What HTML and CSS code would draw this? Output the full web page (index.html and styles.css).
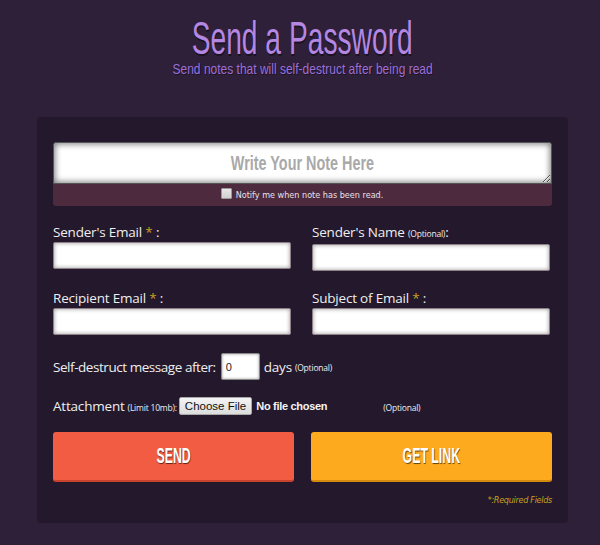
FILE: index.html
```html
<!DOCTYPE html>
<html>
<head>
<meta charset="utf-8">
<link rel="stylesheet" href="styles.css">
</head>
<body>
<div class="page">
  <header class="head">
    <h1 class="title"><span class="sq sq-title">Send a Password</span></h1>
    <p class="subtitle"><span class="sq sq-sub">Send notes that will self-destruct after being read</span></p>
  </header>
  <form class="card">
    <div class="note">
      <div class="note-box">
        <textarea class="note-text" aria-label="Write Your Note Here"></textarea>
        <div class="ph"><span class="sq sq-ph">Write Your Note Here</span></div>
      </div>
      <label class="notify"><span class="check"></span>Notify me when note has been read.</label>
    </div>
    <div class="grid">
      <div class="field">
        <label class="lbl">Sender's Email <span class="star">*</span> :</label>
        <input class="inp" type="text">
      </div>
      <div class="field">
        <label class="lbl">Sender's Name <small class="opt">(Optional)</small>:</label>
        <input class="inp" type="text">
      </div>
      <div class="field">
        <label class="lbl">Recipient Email <span class="star">*</span> :</label>
        <input class="inp" type="text">
      </div>
      <div class="field">
        <label class="lbl">Subject of Email <span class="star">*</span> :</label>
        <input class="inp" type="text">
      </div>
    </div>
    <div class="row destruct">
      <span class="lbl lbl-tight">Self-destruct message after:</span>
      <input class="days" type="text" value="0">
      <span class="lbl">days</span>
      <small class="opt">(Optional)</small>
    </div>
    <div class="row attach">
      <span class="lbl">Attachment</span>
      <small class="opt">(Limit 10mb):</small>
      <span class="file-btn">Choose File</span>
      <span class="file-none">No file chosen</span>
      <small class="opt opt-far">(Optional)</small>
    </div>
    <div class="buttons">
      <button type="button" class="btn btn-send"><span class="sq sq-btn">SEND</span></button>
      <button type="button" class="btn btn-link"><span class="sq sq-btn">GET LINK</span></button>
    </div>
    <p class="req">*:Required Fields</p>
  </form>
</div>
</body>
</html>
```
FILE: styles.css
```css
* { box-sizing: border-box; }
html, body { margin: 0; padding: 0; }
body {
  background: #2e2039;
  font-family: "Open Sans", "Liberation Sans", sans-serif;
  color: #eeeeee;
  width: 600px;
  height: 545px;
  overflow: hidden;
}
.page {
  padding-left: 5px;
}
.sq {
  display: inline-block;
  transform-origin: center;
  white-space: nowrap;
}
.head {
  text-align: center;
  padding-top: 16px;
  height: 117px;
}
.title {
  margin: 0;
  font-family: "Liberation Sans", Arial, sans-serif;
  font-weight: normal;
  font-size: 47px;
  line-height: 44px;
  color: #b487e2;
  text-shadow: 1px 2px 0 #1b1222;
}
.sq-title { transform: scaleX(0.6); }
.subtitle {
  margin: 3px 0 0;
  font-family: "Liberation Sans", Arial, sans-serif;
  font-size: 15px;
  line-height: 12px;
  color: #9d6fd8;
  text-shadow: 1px 1px 0 #1b1222;
}
.sq-sub { transform: scaleX(0.8); }
.card {
  width: 531px;
  margin: 0 auto;
  background: #23182c;
  border-radius: 4px;
  padding: 25px 16px 0 16px;
  height: 406px;
}
.note {
  border-radius: 3px;
  overflow: hidden;
}
.note-box {
  position: relative;
}
.note-text {
  display: block;
  width: 100%;
  height: 42px;
  border: 1px solid #555;
  border-radius: 3px 3px 0 0;
  background: #fff;
  box-shadow: inset 0 0 6px 1px #777;
  resize: vertical;
  outline: none;
}
.ph {
  position: absolute;
  inset: 0;
  display: flex;
  align-items: center;
  justify-content: center;
  pointer-events: none;
  font-family: "Liberation Sans", Arial, sans-serif;
  font-weight: bold;
  font-size: 20px;
  color: #a9a9a9;
  padding-top: 1px;
}
.sq-ph { transform: scaleX(0.72); }
.notify {
  display: flex;
  align-items: center;
  justify-content: center;
  height: 22px;
  background: #4e2a3e;
  font-family: "DejaVu Sans Condensed", "DejaVu Sans", sans-serif;
  font-size: 9px;
  color: #e6e0ea;
  padding-right: 1px;
}
.check {
  width: 11px;
  height: 11px;
  background: linear-gradient(#e8e8e8, #d0d0d0);
  border: 1px solid #9a9a9a;
  border-radius: 1px;
  margin-right: 4px;
  margin-top: -4px;
}
.grid {
  display: grid;
  grid-template-columns: 238px 238px;
  column-gap: 21px;
  row-gap: 17px;
  margin-top: 16px;
}
.field { display: flex; flex-direction: column; }
.lbl {
  font-size: 13.5px;
  line-height: 20px;
  color: #eeeeee;
  letter-spacing: -0.2px;
}
.lbl-tight { letter-spacing: -0.45px; }
.star { color: #c9a11f; }
.opt {
  font-size: 8.5px;
  color: #eeeeee;
  letter-spacing: -0.2px;
}
.inp {
  width: 100%;
  height: 27px;
  border: 1px solid #8e7f88;
  border-radius: 2px;
  background: #fff;
  box-shadow: inset 0 0 4px #999;
  outline: none;
}
.row {
  display: flex;
  align-items: center;
}
.destruct {
  margin-top: 18px;
  height: 27px;
}
.days {
  width: 39px;
  height: 27px;
  margin: 0 4px 0 5px;
  border: 1px solid #888;
  border-radius: 2px;
  background: #fff;
  box-shadow: inset 0 0 3px #999;
  font-family: "Liberation Sans", sans-serif;
  font-size: 11px;
  color: #222;
  padding: 0 4px;
  outline: none;
}
.destruct .opt { margin-left: 3px; margin-top: 2px; }
.attach {
  margin-top: 17px;
  height: 18px;
}
.attach .opt { margin-left: 3px; margin-top: 2px; }
.file-btn {
  margin-left: 2px;
  height: 18px;
  padding: 0 5px;
  display: flex;
  align-items: center;
  background: linear-gradient(#f4f4f4, #dcdcdc);
  border: 1px solid #a8a8a8;
  border-radius: 2px;
  color: #111;
  font-family: "Liberation Sans", sans-serif;
  font-size: 11.5px;
}
.file-none {
  margin-left: 4px;
  font-family: "Liberation Sans", sans-serif;
  font-size: 11px;
  font-weight: bold;
  color: #f4f4f4;
  letter-spacing: -0.3px;
}
.attach .opt-far { margin-left: 56px; }
.buttons {
  display: flex;
  gap: 17px;
  margin-top: 17px;
}
.btn {
  width: 241px;
  height: 50px;
  border: none;
  border-radius: 3px;
  font-family: "Liberation Sans", Arial, sans-serif;
  font-weight: bold;
  font-size: 22px;
  color: #fff;
  text-shadow: 1px 1px 1px rgba(0,0,0,0.6);
  padding: 0;
}
.sq-btn { transform: scaleX(0.56); }
.btn-send {
  background: #f25c43;
  border-bottom: 2px solid #c7432e;
}
.btn-link {
  background: #fdaa1f;
  border-bottom: 2px solid #d48a0c;
}
.req {
  margin: 13px 0 0;
  text-align: right;
  font-family: "DejaVu Sans Condensed", "DejaVu Sans", sans-serif;
  font-style: italic;
  font-size: 9px;
  color: #c9a11f;
  letter-spacing: -0.3px;
}
```
